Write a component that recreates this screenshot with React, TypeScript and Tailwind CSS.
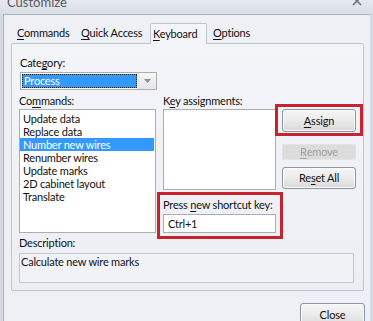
import type { ReactNode } from "react";

function Acc({ children }: { children: ReactNode }) {
  return <span className="underline decoration-1 underline-offset-[2px]">{children}</span>;
}

function Btn({ children, className = "" }: { children: ReactNode; className?: string }) {
  return (
    <div
      className={
        "flex items-center justify-center rounded-[3px] border border-[#8f959e] bg-gradient-to-b from-[#f6f6f6] via-[#ebebeb] to-[#d9d9d9] shadow-[inset_0_0_0_1px_#fbfbfb] leading-[14px] " +
        className
      }
    >
      {children}
    </div>
  );
}

const commands = [
  "Update data",
  "Replace data",
  "Number new wires",
  "Renumber wires",
  "Update marks",
  "2D cabinet layout",
  "Translate",
];

export default function App() {
  return (
    <div className="w-[373px] h-[321px] overflow-hidden flex flex-col bg-[#d5dae2] text-[11px] tracking-[-0.2px] text-[#111] font-['Lato',sans-serif]">
      {/* title bar */}
      <div className="h-[14px] shrink-0 flex justify-between pl-[7px] pr-[11px] bg-gradient-to-b from-[#e6e9ee] to-[#dadee6] overflow-hidden">
        <span className="-mt-[6px] text-[13px] leading-[16px] tracking-normal text-[#555a62]">Customize</span>
        <svg width="10" height="10" viewBox="0 0 10 10" className="-mt-[4px]">
          <path d="M1 1 L9 9 M9 1 L1 9" stroke="#6b7079" strokeWidth="1.6" fill="none" />
        </svg>
      </div>

      <div className="flex-1 flex pl-[3px] pr-[4px]">
        <div className="flex-1 flex flex-col bg-[#eef0f5] border-l border-t border-[#a9b1bd] pl-[7px] pr-[6px] pt-[8px]">
          {/* tabs */}
          <div className="flex items-end h-[20px] whitespace-nowrap">
            <div className="w-[64px] h-[20px] pl-[6px] leading-[20px]">
              <Acc>C</Acc>ommands
            </div>
            <div className="w-[75px] h-[20px] pl-[6px] leading-[20px]">
              <Acc>Q</Acc>uick Access
            </div>
            <div className="relative z-10 w-[57px] h-[21px] -mb-px pl-[2px] leading-[19px] border border-b-0 border-[#bfc5ce] rounded-t-[2px] bg-[#f4f5f9]">
              <Acc>K</Acc>eyboard
            </div>
            <div className="h-[20px] pl-[6px] leading-[20px]">
              <Acc>O</Acc>ptions
            </div>
          </div>

          {/* panel */}
          <div className="h-[248px] shrink-0 border border-[#bfc5ce] rounded-[2px] bg-gradient-to-b from-[#f4f5f9] to-[#eceef3] pl-[7px] flex flex-col">
            <div className="mt-[12px] ml-[1px] leading-[14px]">
              Cate<Acc>g</Acc>ory:
            </div>
            <div className="mt-[2px] ml-[1px] w-[137px] h-[18px] flex border border-[#abadb3] bg-white">
              <div className="flex-1 p-[1px]">
                <div className="h-full border border-dotted border-[#1a1a1a] bg-[#3399ff] text-white pl-[1px] leading-[12px]">
                  Process
                </div>
              </div>
              <div className="w-[18px] flex items-center justify-center bg-gradient-to-b from-[#f7f7f7] to-[#e6e6e6] border-l border-[#e0e0e0]">
                <svg width="7" height="4" viewBox="0 0 7 4">
                  <path d="M0 0 H7 L3.5 4 Z" fill="#8a8f96" />
                </svg>
              </div>
            </div>

            <div className="mt-[4px] flex">
              {/* left column */}
              <div className="w-[137px] flex flex-col">
                <div className="leading-[14px]">
                  Co<Acc>m</Acc>mands:
                </div>
                <div className="mt-[1px] h-[124px] border border-[#abadb3] bg-white pt-[2px]">
                  {commands.map((c) => (
                    <div
                      key={c}
                      className={
                        "h-[13px] leading-[13px] pl-[3px] whitespace-nowrap " +
                        (c === "Number new wires" ? "bg-[#3399ff] text-white mr-[1px]" : "")
                      }
                    >
                      {c}
                    </div>
                  ))}
                </div>
                <div className="mt-[3px] leading-[14px]">Description:</div>
              </div>

              {/* middle column */}
              <div className="ml-[7px] w-[113px] flex flex-col">
                <div className="leading-[14px] whitespace-nowrap">
                  K<Acc>e</Acc>y assignments:
                </div>
                <div className="mt-[1px] h-[81px] border border-[#abadb3] bg-white" />
                <div className="relative z-10 mt-[2px] -ml-[6px] w-[126px] h-[47px] border-[3px] border-[#c5242f] pl-[3px] pt-[3px]">
                  <div className="leading-[14px] whitespace-nowrap">
                    Press <Acc>n</Acc>ew shortcut key:
                  </div>
                  <div className="mt-[2px] w-[113px] h-[19px] border border-[#abadb3] bg-white pl-[4px] leading-[17px]">
                    Ctrl+1
                  </div>
                </div>
              </div>

              {/* buttons */}
              <div className="relative z-10 -ml-[1px] w-[88px] flex flex-col">
                <div className="mt-[10px] h-[32px] border-[3px] border-[#c5242f] pl-[4px] pt-[2px]">
                  <Btn className="w-[74px] h-[23px]">
                    <Acc>A</Acc>ssign
                  </Btn>
                </div>
                <div className="mt-[8px] ml-[7px] w-[74px] h-[16px] flex items-center justify-center bg-[#dcdcdc] border border-[#e4e4e4] text-[#a0a0a0] leading-[14px]">
                  <Acc>R</Acc>emove
                </div>
                <Btn className="mt-[7px] ml-[7px] w-[74px] h-[22px]">
                  Re<Acc>s</Acc>et All
                </Btn>
              </div>
            </div>

            <div className="mt-[3px] w-[335px] h-[30px] border border-[#c3c8d0] bg-[#f1f2f6] pl-[1px] pt-[1px] leading-[14px]">
              Calculate new wire marks
            </div>
          </div>

          <div className="mt-[12px] flex justify-end -mr-[1px]">
            <Btn className="w-[65px] h-[23px]">Close</Btn>
          </div>
        </div>
      </div>
    </div>
  );
}
